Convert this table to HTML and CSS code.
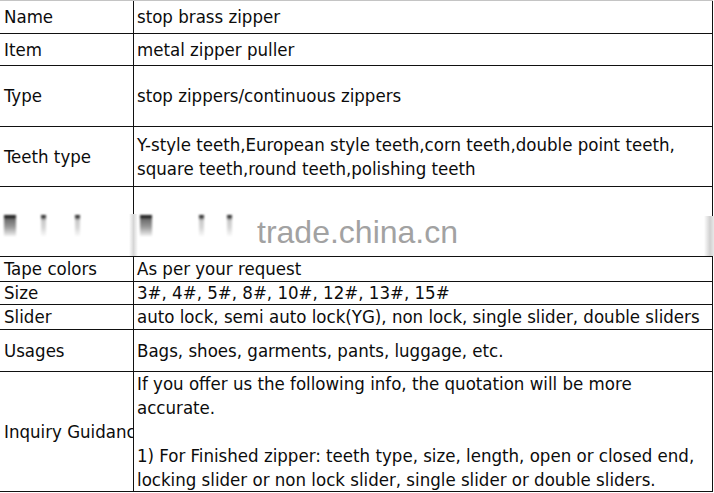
FILE: index.html
```html
<!DOCTYPE html>
<html lang="en">
<head>
<meta charset="utf-8">
<title>stop brass zipper</title>
<link rel="stylesheet" href="styles.css">
</head>
<body>
<div class="spec">
  <div class="row r-name"><div class="key">Name</div><div class="val">stop brass zipper</div></div>
  <div class="row r-item"><div class="key">Item</div><div class="val">metal zipper puller</div></div>
  <div class="row r-type"><div class="key">Type</div><div class="val">stop zippers/continuous zippers</div></div>
  <div class="row r-teeth"><div class="key">Teeth type</div><div class="val">Y-style teeth,European style teeth,corn teeth,double point teeth,<br>square teeth,round teeth,polishing teeth</div></div>
  <div class="row r-pic">
    <div class="key"></div><div class="val"></div>
    <span class="blob dark b1"></span>
    <span class="blob thin b2"></span>
    <span class="blob thin b3"></span>
    <span class="blob dark b4"></span>
    <span class="blob thin b5"></span>
    <span class="blob thin b6"></span>
    <span class="fade f-div"></span>
    <span class="fade f-right"></span>
    <span class="mark">trade.china.cn</span>
  </div>
  <div class="row r-tape"><div class="key">Tape colors</div><div class="val">As per your request</div></div>
  <div class="row r-size"><div class="key">Size</div><div class="val">3#, 4#, 5#, 8#, 10#, 12#, 13#, 15#</div></div>
  <div class="row r-slider"><div class="key">Slider</div><div class="val">auto lock, semi auto lock(YG), non lock, single slider, double sliders</div></div>
  <div class="row r-usage"><div class="key">Usages</div><div class="val">Bags, shoes, garments, pants, luggage, etc.</div></div>
  <div class="row r-inq"><div class="key">Inquiry Guidance</div><div class="val">If you offer us the following info, the quotation will be more<br>accurate.<br><br>1) For Finished zipper: teeth type, size, length, open or closed end,<br>locking slider or non lock slider, single slider or double sliders.</div></div>
</div>
</body>
</html>
```
FILE: styles.css
```css
html, body {
  margin: 0;
  padding: 0;
  background: #fff;
}
.spec {
  width: 713px;
  border-top: 1px solid #c4c4c4;
  font-family: "DejaVu Sans Condensed", "DejaVu Sans", sans-serif;
  font-stretch: condensed;
  font-size: 18.5px;
  line-height: 24px;
  color: #0c0c0c;
}
.row {
  box-sizing: border-box;
  display: flex;
  border-bottom: 1px solid #111;
  border-right: 1px solid #111;
  position: relative;
}
.key {
  box-sizing: border-box;
  flex: 0 0 134px;
  border-right: 1px solid #111;
  padding-left: 4px;
  display: flex;
  align-items: center;
  white-space: nowrap;
  overflow: hidden;
}
.val {
  flex: 1 1 auto;
  padding-left: 3px;
  display: flex;
  align-items: center;
  white-space: nowrap;
}
.r-name { height: 33px; }
.r-item { height: 32px; }
.r-type { height: 61px; }
.r-teeth { height: 60px; }
.r-pic { height: 70px; }
.r-tape { height: 25px; }
.r-size { height: 23px; }
.r-slider { height: 25px; }
.r-usage { height: 42px; }
.r-inq { height: 120px; }

.blob {
  position: absolute;
  top: 28px;
  height: 21px;
  filter: blur(0.8px);
}
.blob.dark {
  width: 12px;
  background: linear-gradient(to bottom, #1a1a1a 0, #1a1a1a 2px, #6a6a6a 4px, #9a9a9a 12px, #f0f0f0 21px);
}
.blob.thin {
  width: 5px;
  background: linear-gradient(to bottom, #222 0, #333 2px, #c8c8c8 5px, #d8d8d8 13px, #fafafa 21px);
}
.b1 { left: 4px; }
.b2 { left: 41px; }
.b3 { left: 75px; }
.b4 { left: 140px; }
.b5 { left: 199px; }
.b6 { left: 227px; }
.fade {
  position: absolute;
}
.f-div {
  left: 129px;
  top: 27px;
  width: 9px;
  height: 42px;
  background: linear-gradient(to right, #fff 0, #d6d6d6 50%, #fff 100%);
  filter: blur(0.6px);
}
.f-right {
  right: -2px;
  top: 29px;
  width: 10px;
  height: 40px;
  background: linear-gradient(to right, #fff 0, #d0d0d0 60%, #e8e8e8 100%);
  filter: blur(0.6px);
}
.mark {
  position: absolute;
  left: 257px;
  top: 27px;
  font-family: "Liberation Sans", Arial, sans-serif;
  font-stretch: normal;
  font-size: 32px;
  line-height: 36px;
  color: #a2a2a2;
}
```
